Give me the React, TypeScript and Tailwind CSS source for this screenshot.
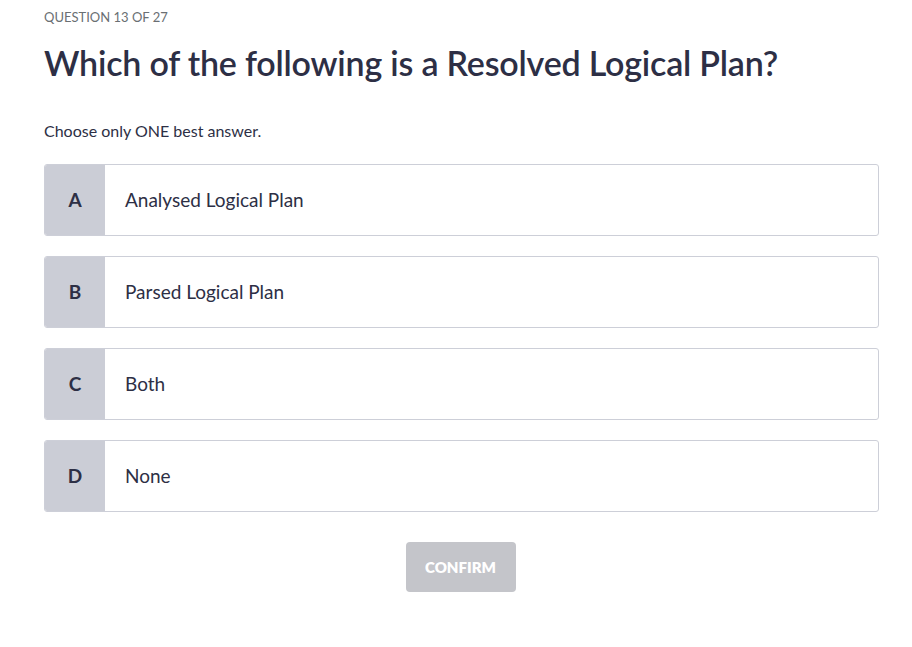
import React, { useState } from 'react';

const OPTIONS = [
  { key: 'A', label: 'Analysed Logical Plan' },
  { key: 'B', label: 'Parsed Logical Plan' },
  { key: 'C', label: 'Both' },
  { key: 'D', label: 'None' },
];

const App: React.FC = () => {
  const [selected, setSelected] = useState<string | null>(null);

  return (
    <div className="min-h-screen bg-white text-[#2d2f45] px-[44px] pt-[9px]" style={{ fontFamily: 'Lato, "Open Sans", sans-serif' }}>
      <p className="text-[13px] leading-[16px] text-[#6a6f73] uppercase">Question 13 of 27</p>
      <h1 className="mt-[18px] text-[34px] leading-[40px] font-semibold tracking-[-0.2px]">
        Which of the following is a Resolved Logical Plan?
      </h1>
      <p className="mt-[37px] text-[16px] leading-[22px]">Choose only ONE best answer.</p>

      <div className="mt-[22px] flex flex-col gap-[20px] w-[835px]">
        {OPTIONS.map(o => (
          <button
            key={o.key}
            onClick={() => setSelected(o.key)}
            className={`flex h-[72px] items-stretch rounded-[3px] border text-left overflow-hidden ${selected === o.key ? 'border-[#2d2f45]' : 'border-[#cdcfd8]'}`}
          >
            <span className="w-[60px] shrink-0 flex items-center justify-center bg-[#cbcdd6] text-[19px] font-bold">
              {o.key}
            </span>
            <span className="flex items-center pl-[20px] text-[19px]">{o.label}</span>
          </button>
        ))}
      </div>

      <div className="mt-[30px] flex justify-center w-[833px]">
        <button className="w-[110px] h-[50px] rounded-[4px] bg-[#c4c5ca] text-white text-[15px] font-extrabold uppercase">
          Confirm
        </button>
      </div>
    </div>
  );
};

export default App;
